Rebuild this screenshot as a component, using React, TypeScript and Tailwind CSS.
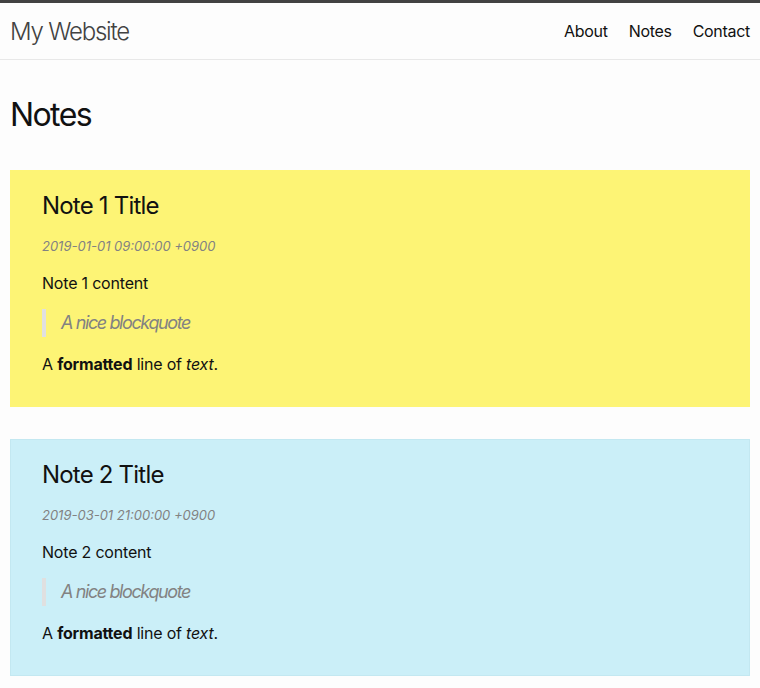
export default function App() {
  const notes = [
    { title: "Note 1 Title", date: "2019-01-01 09:00:00 +0900", content: "Note 1 content", bg: "bg-[#fdf475] border-[#fdf475]" },
    { title: "Note 2 Title", date: "2019-03-01 21:00:00 +0900", content: "Note 2 content", bg: "bg-[#cbeff8] border-[#c3e8f1]" },
  ];
  return (
    <div className="min-h-[688px] bg-[#fdfdfd] text-[#111] font-['Inter',sans-serif]">
      <div className="h-[3px] bg-[#424242]" />
      <header className="h-[57px] border-b border-[#e8e8e8] px-[10px] flex items-center justify-between">
        <div className="text-[24px] font-light tracking-[-1.2px] text-[#424242] pt-[2px]">My Website</div>
        <nav className="flex gap-[21px] text-[16px] tracking-[-0.3px] text-[#111]">
          <span>About</span>
          <span>Notes</span>
          <span>Contact</span>
        </nav>
      </header>
      <main className="px-[10px] pt-[35px]">
        <h1 className="text-[32px] leading-[40px] font-normal tracking-[-1.6px]">Notes</h1>
        <div className="mt-[35px] flex flex-col gap-[32px]">
          {notes.map((n) => (
            <div key={n.title} className={`${n.bg} border pt-[20px] pb-[30px] px-[31px]`}>
              <h2 className="text-[24px] leading-[30px] tracking-[-0.8px]">{n.title}</h2>
              <div className="mt-[15px] text-[13px] leading-[20px] italic text-[#828282]">{n.date}</div>
              <p className="mt-[15px] text-[16px] leading-[24px] tracking-[-0.2px]">{n.content}</p>
              <blockquote className="mt-[14px] border-l-4 border-[#e0e0e0] pl-[15px] text-[18px] leading-[28px] italic tracking-[-1.4px] text-[#828282]">
                A nice blockquote
              </blockquote>
              <p className="mt-[15px] text-[16px] leading-[24px] tracking-[-0.2px]">
                A <b className="font-bold">formatted</b> line of <i>text</i>.
              </p>
            </div>
          ))}
        </div>
      </main>
    </div>
  );
}
